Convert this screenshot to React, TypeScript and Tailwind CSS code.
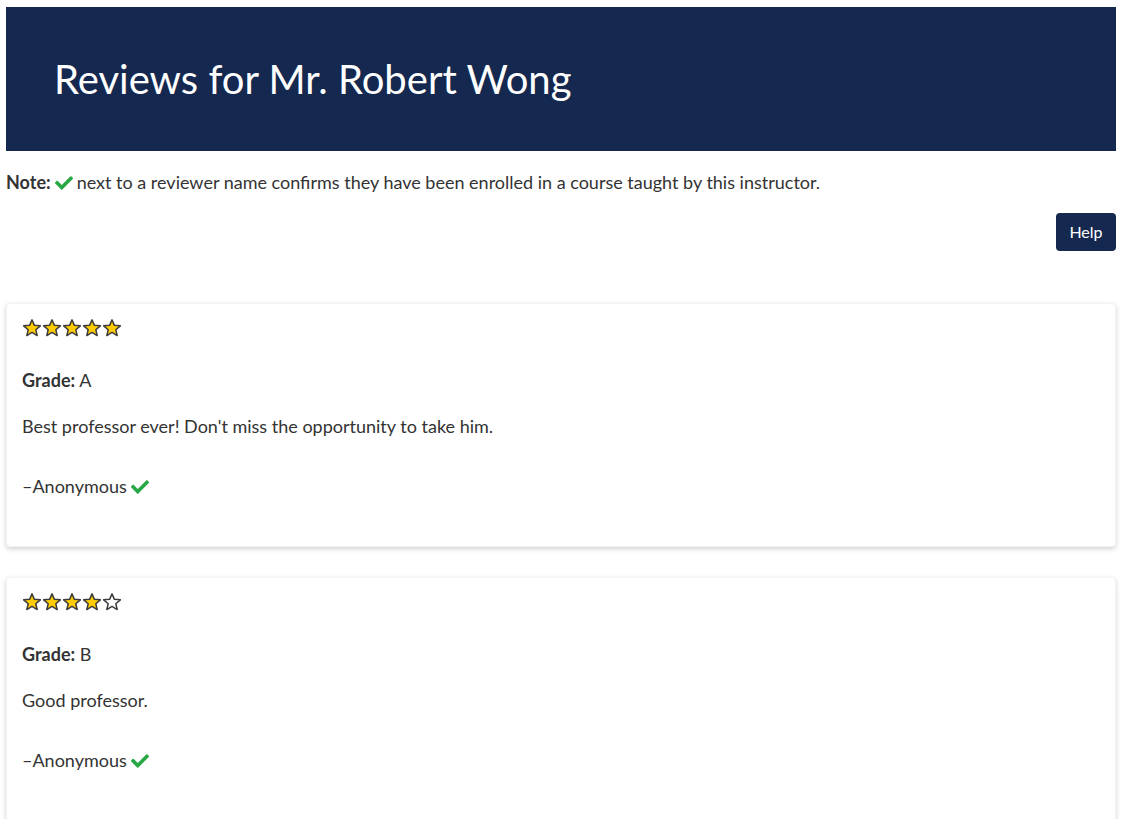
import React from "react";
import { FaCheck } from "react-icons/fa";

type Review = {
  stars: number;
  grade: string;
  text: string;
  author: string;
  verified: boolean;
};

const reviews: Review[] = [
  {
    stars: 5,
    grade: "A",
    text: "Best professor ever! Don't miss the opportunity to take him.",
    author: "Anonymous",
    verified: true,
  },
  { stars: 4, grade: "B", text: "Good professor.", author: "Anonymous", verified: true },
];

const Star = ({ filled }: { filled: boolean }) => (
  <svg width="20" height="20" viewBox="0 0 24 24">
    <path
      d="M12 2.2l2.9 6.6 7.1.6-5.4 4.7 1.6 7-6.2-3.8-6.2 3.8 1.6-7L2 9.4l7.1-.6z"
      fill={filled ? "#ffcc00" : "#ffffff"}
      stroke="#3b3b3b"
      strokeWidth="1.8"
      strokeLinejoin="round"
    />
  </svg>
);

const ReviewCard = ({ review }: { review: Review }) => (
  <div className="bg-white rounded-[4px] shadow-[0_2px_5px_rgba(0,0,0,0.18)] border border-[#f4f4f4] px-[15px] pt-[14px] pb-[46px]">
    <div className="flex h-5">
      {[1, 2, 3, 4, 5].map((i) => (
        <Star key={i} filled={i <= review.stars} />
      ))}
    </div>
    <p className="mt-[29px] leading-[27px]">
      <b>Grade:</b> {review.grade}
    </p>
    <p className="mt-[19px] leading-[27px]">{review.text}</p>
    <p className="mt-[33px] leading-[27px] flex items-center">
      –{review.author}
      {review.verified && <FaCheck className="ml-1 text-[#28a745]" size={18} />}
    </p>
  </div>
);

const App = () => {
  return (
    <div className="pl-[6px] pr-[9px] pt-[7px] pb-10 text-[18px] text-[#333] font-['Lato','Open_Sans',sans-serif] bg-white min-h-screen">
      <div className="h-[144px] bg-[#15284f] flex items-center px-12">
        <h1 className="text-[40px] text-white leading-none">Reviews for Mr. Robert Wong</h1>
      </div>
      <p className="mt-[18px] leading-[27px] flex items-center">
        <b>Note:</b>
        <FaCheck className="mx-1 text-[#28a745]" size={18} />
        next to a reviewer name confirms they have been enrolled in a course taught by this instructor.
      </p>
      <div className="flex justify-end mt-[17px]">
        <button className="bg-[#15284f] text-white rounded-[4px] h-[38px] w-[60px] text-[16px]">
          Help
        </button>
      </div>
      <div className="flex flex-col gap-[30px] mt-[52px]">
        {reviews.map((r, i) => (
          <ReviewCard key={i} review={r} />
        ))}
      </div>
    </div>
  );
};

export default App;
